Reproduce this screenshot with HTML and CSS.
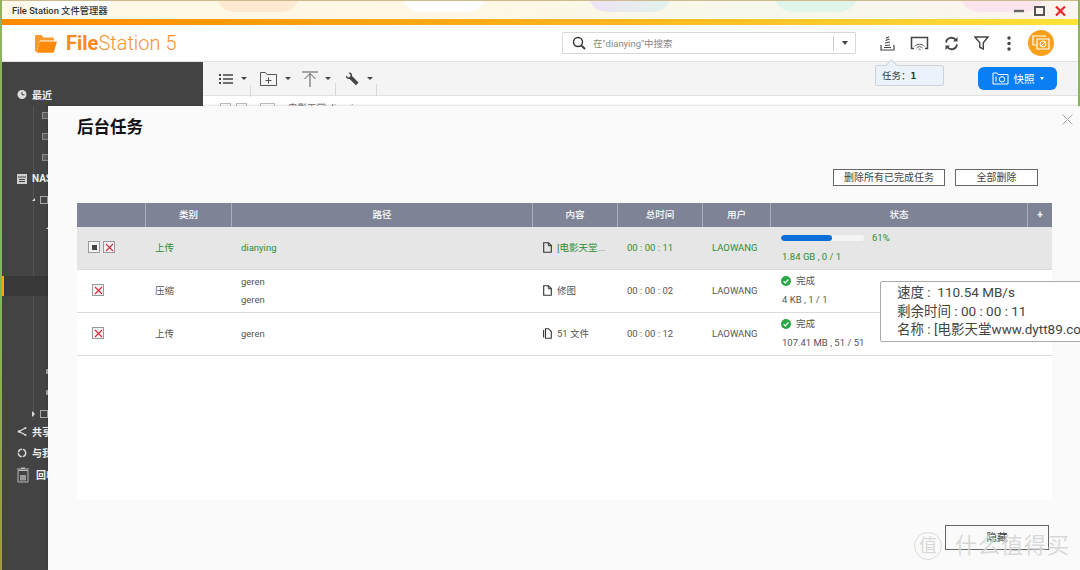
FILE: index.html
```html
<!DOCTYPE html>
<html lang="zh-CN">
<head>
  <meta charset="UTF-8">
  <title>File Station 文件管理器</title>
  <link rel="stylesheet" href="styles.css">
</head>
<body>
  <div class="window">
    <!-- 标题栏 -->
    <div class="titlebar">
      <div class="blobs">
        <span class="blob"></span>
        <span class="blob blob-peach"></span>
        <span class="blob"></span>
        <span class="blob blob-violet"></span>
        <span class="blob blob-mint"></span>
        <span class="blob blob-pink"></span>
      </div>
      <span class="titlebar-name">File Station 文件管理器</span>
      <div class="win-btns">
        <svg width="10" height="10" viewBox="0 0 10 10"><path d="M0 5h10" stroke="#666" stroke-width="2.4"/></svg>
        <svg width="11" height="10" viewBox="0 0 11 10"><path d="M1 1h9v8H1z" fill="none" stroke="#555" stroke-width="2"/></svg>
        <svg width="11" height="10" viewBox="0 0 11 10"><path d="M1 .5l9 9M10 .5l-9 9" stroke="#e8262a" stroke-width="2.2"/></svg>
      </div>
    </div>
    <div class="accent"></div>

    <!-- 顶部 -->
    <header class="header">
      <svg class="logo" width="24" height="19" viewBox="0 0 24 19">
        <path d="M1 17V2.500C1 1.700 1.600 1 2.500 1h5l2 2.500h9c.8 0 1.500.7 1.500 1.500v1.500H6L2.500 18z" fill="#fb9a2c"/>
        <path d="M5.800 7.500H23l-3 10.200c-.2.700-.7 1.100-1.400 1.100H2.600z" fill="#fd8a0b"/>
      </svg>
      <div class="brand"><b>File</b>Station 5</div>
      <div class="search">
        <svg width="14" height="14" viewBox="0 0 14 14"><circle cx="6" cy="6" r="4.500" fill="none" stroke="#333" stroke-width="1.400"/><path d="M9.300 9.300l3.700 3.700" stroke="#333" stroke-width="1.800"/></svg>
        <span class="search-text">在"dianying"中搜索</span>
        <span class="search-drop"><i class="caret"></i></span>
      </div>
      <div class="header-icons">
        <svg width="15" height="15" viewBox="0 0 15 15"><path d="M1 9v5h13V9M4 11.500h7M5 9.500l5-.5M5 7l5-1M5.500 4.500L9.500 3M6 2.200L9 .8" fill="none" stroke="#444" stroke-width="1.200"/></svg>
        <svg width="19" height="14" viewBox="0 0 19 14"><path d="M4 12.500H1.500V1.500h16v11H15" fill="none" stroke="#444" stroke-width="1.500"/><path d="M4.500 10.500c2.500-3 7.500-3 10 0M6.500 12c1.500-1.800 4.500-1.800 6 0M8.500 13.500c.6-.6 1.400-.6 2 0" fill="none" stroke="#555"/></svg>
        <svg width="15" height="15" viewBox="0 0 15 15"><path d="M2 6.500A5.500 5.500 0 0 1 12 4.200M13 8.500A5.500 5.500 0 0 1 3 10.800" fill="none" stroke="#444" stroke-width="1.800"/><path d="M13.500 1v4.500H9zM1.500 14V9.500H6z" fill="#444"/></svg>
        <svg width="15" height="14" viewBox="0 0 15 14"><path d="M1 1h13L9.300 6.800V13l-3.500-1.800v-4.400z" fill="none" stroke="#444" stroke-width="1.400"/></svg>
        <svg class="icon-dots" width="4" height="15" viewBox="0 0 4 15"><circle cx="2" cy="2" r="1.700" fill="#444"/><circle cx="2" cy="7.500" r="1.700" fill="#444"/><circle cx="2" cy="13" r="1.700" fill="#444"/></svg>
        <span class="avatar">
          <svg width="18" height="16" viewBox="0 0 18 16"><path d="M13 2V1H1v9h3" fill="none" stroke="#fff" stroke-width="1.200"/><path d="M5 4h12v10H5z" fill="none" stroke="#fff" stroke-width="1.200"/><circle cx="11" cy="9" r="3" fill="none" stroke="#fff"/><path d="M9 11l4-4" stroke="#fff"/></svg>
        </span>
      </div>
    </header>

    <div class="main">
      <!-- 左侧导航 -->
      <aside class="sidebar">
        <div class="tree-line"></div>
        <div class="side-row side-top">
          <svg width="9" height="9" viewBox="0 0 9 9"><circle cx="4.500" cy="4.500" r="4.500" fill="#ddd"/><path d="M4.500 2v2.800H7" fill="none" stroke="#444"/></svg>
          <b>最近</b>
        </div>
        <div class="side-row side-sub"><i class="mini-doc"></i></div>
        <div class="side-row side-sub"><i class="mini-doc"></i></div>
        <div class="side-row side-sub"><i class="mini-doc"></i></div>
        <div class="side-row side-top">
          <svg width="10" height="10" viewBox="0 0 10 10"><path d="M0 0h10v10H0z" fill="#cfcfcf"/><path d="M1 3h8M2 5.500h6M2 7.500h6" stroke="#444"/></svg>
          <b>NAS</b>
        </div>
        <div class="side-row side-sub side-open"><i class="tri-open"></i><i class="mini-drive"></i></div>
        <div class="side-row side-leaf side-leaf-low"><i class="tri-open"></i></div>
        <div class="side-row"></div>
        <div class="side-row"></div>
        <div class="side-row side-selected"></div>
        <div class="side-row"></div>
        <div class="side-row"></div>
        <div class="side-row"></div>
        <div class="side-row side-leaf"><i class="dot"></i></div>
        <div class="side-row side-leaf"><i class="dot"></i></div>
        <div class="side-row side-sub side-open side-closed"><i class="tri-closed"></i><i class="mini-drive"></i></div>
        <div class="side-row side-top">
          <svg width="9" height="9" viewBox="0 0 9 9"><path d="M8 1L1.500 4.500 8 8" fill="none" stroke="#ddd" stroke-width="1.300"/><circle cx="1.500" cy="4.500" r="1.300" fill="#ddd"/><circle cx="8" cy="1" r="1" fill="#ddd"/><circle cx="8" cy="8" r="1" fill="#ddd"/></svg>
          <b>共享</b>
        </div>
        <div class="side-row side-top">
          <svg width="10" height="10" viewBox="0 0 10 10"><circle cx="5" cy="5" r="3.700" fill="none" stroke="#ddd" stroke-width="1.400" stroke-dasharray="5 1"/></svg>
          <b>与我</b>
        </div>
        <div class="side-row side-top side-trash">
          <svg width="12" height="16" viewBox="0 0 12 16"><path d="M1 3.500h10V15H1z" fill="none" stroke="#bbb"/><path d="M3 8h6v5.500H3z" fill="#999"/><path d="M0 2h12M4 1h4" stroke="#bbb" stroke-width="1.200"/></svg>
          <b>回收</b>
        </div>
      </aside>

      <div class="content">
        <!-- 工具栏 -->
        <div class="toolbar">
          <div class="tool">
            <svg width="14" height="12" viewBox="0 0 14 12"><path d="M4 2h10M4 6h10M4 10h10" stroke="#444" stroke-width="1.400"/><path d="M0 1h2v2H0zM0 5h2v2H0zM0 9h2v2H0z" fill="#444"/></svg>
            <i class="caret caret-small"></i>
          </div>
          <div class="tool tool-folder">
            <svg width="17" height="14" viewBox="0 0 17 14"><path d="M.5 13.500V.5h5l1.500 2h9.500v11z" fill="none" stroke="#555"/><path d="M8.500 5.500v6M5.500 8.500h6" stroke="#555"/></svg>
            <i class="caret caret-small"></i>
          </div>
          <div class="tool tool-upload">
            <svg width="16" height="16" viewBox="0 0 16 16"><path d="M0 1h16M8 16V2.500M2.500 8L8 2.500 13.500 8" fill="none" stroke="#555"/></svg>
            <i class="caret caret-small"></i>
          </div>
          <div class="tool tool-wrench">
            <svg width="14" height="14" viewBox="0 0 14 14"><path d="M1 3.500L3.300 5.500 5.300 4.800 5.500 2.800 3.500.8C5.500 0 7.500 1.500 7 4l6.500 6.500-2.500 2.700L4.500 7C2.200 7.500.5 5.500 1 3.500z" fill="#444"/></svg>
            <i class="caret caret-small"></i>
          </div>
          <button class="snapshot">
            <svg width="17" height="13" viewBox="0 0 17 13"><path d="M1 12V1h4l1 1.500h10V12z" fill="none" stroke="#fff"/><circle cx="10" cy="7.300" r="2.700" fill="none" stroke="#fff"/><path d="M4 4.500v5" stroke="#fff"/></svg>
            <span class="snapshot-text">快照</span>
            <i class="caret caret-white"></i>
          </button>
        </div>
        <div class="file-row">
          <i class="file-check"></i>
          <i class="file-check"></i>
          <i class="file-check file-check-wide"></i>
          <span class="file-name">电影天堂 dianying</span>
        </div>
      </div>
    </div>
  </div>

  <div class="task-tip">任务：<b>1</b></div>

  <!-- 后台任务对话框 -->
  <div class="modal">
    <svg class="modal-close" width="11" height="11" viewBox="0 0 11 11"><path d="M.5.500l10 10M10.500.500l-10 10" stroke="#aaa"/></svg>
    <h2 class="modal-title">后台任务</h2>
    <div class="modal-actions">
      <button class="btn btn-wide">删除所有已完成任务</button>
      <button class="btn">全部删除</button>
    </div>

    <div class="panel">
      <div class="row row-head">
        <div></div>
        <div>类别</div>
        <div>路径</div>
        <div>内容</div>
        <div>总时间</div>
        <div>用户</div>
        <div>状态</div>
        <div class="plus">+</div>
      </div>

      <div class="row row-active">
        <div class="cell-actions">
          <span class="act act-stop"><i></i></span>
          <span class="act"><svg width="9" height="9" viewBox="0 0 9 9"><path d="M1 1l7 7M8 1L1 8" stroke="#d8283c" stroke-width="1.100"/></svg></span>
        </div>
        <div class="cell-pad">上传</div>
        <div class="cell-pad">dianying</div>
        <div class="cell-file">
          <svg width="9" height="11" viewBox="0 0 9 11"><path d="M.7.700h4.800l2.800 2.800v6.800H.7z" fill="none" stroke="#333" stroke-width="1.100"/><path d="M5.300.700v3h3" fill="none" stroke="#333"/></svg>
          [电影天堂...
        </div>
        <div class="cell-pad">00 : 00 : 11</div>
        <div class="cell-pad">LAOWANG</div>
        <div class="cell-status">
          <div class="progress-line">
            <div class="bar"><div class="bar-fill" style="width: 61%"></div></div>
            <span>61%</span>
          </div>
          <div class="status-sub">1.84 GB , 0 / 1</div>
        </div>
        <div></div>
      </div>

      <div class="row">
        <div class="cell-actions">
          <span class="act"><svg width="9" height="9" viewBox="0 0 9 9"><path d="M1 1l7 7M8 1L1 8" stroke="#d8283c" stroke-width="1.100"/></svg></span>
        </div>
        <div class="cell-pad">压缩</div>
        <div class="cell-pad cell-paths"><span>geren</span><span>geren</span></div>
        <div class="cell-file">
          <svg width="9" height="11" viewBox="0 0 9 11"><path d="M.7.700h4.800l2.800 2.800v6.800H.7z" fill="none" stroke="#333" stroke-width="1.100"/><path d="M5.300.700v3h3" fill="none" stroke="#333"/></svg>
          修图
        </div>
        <div class="cell-pad">00 : 00 : 02</div>
        <div class="cell-pad">LAOWANG</div>
        <div class="cell-status">
          <div class="done-line">
            <svg width="10" height="10" viewBox="0 0 10 10"><circle cx="5" cy="5" r="5" fill="#27a844"/><path d="M2.600 5.100l1.700 1.700 3.100-3.300" fill="none" stroke="#fff" stroke-width="1.200"/></svg>
            完成
          </div>
          <div class="status-sub">4 KB , 1 / 1</div>
        </div>
        <div></div>
      </div>

      <div class="row">
        <div class="cell-actions">
          <span class="act"><svg width="9" height="9" viewBox="0 0 9 9"><path d="M1 1l7 7M8 1L1 8" stroke="#d8283c" stroke-width="1.100"/></svg></span>
        </div>
        <div class="cell-pad">上传</div>
        <div class="cell-pad">geren</div>
        <div class="cell-file">
          <svg width="9" height="11" viewBox="0 0 9 11"><path d="M2.500.700h3l2.800 2.800v6.800H2.500z" fill="none" stroke="#333" stroke-width="1.100"/><path d="M.6 2v7.500" stroke="#333" stroke-width="1.100"/></svg>
          51 文件
        </div>
        <div class="cell-pad">00 : 00 : 12</div>
        <div class="cell-pad">LAOWANG</div>
        <div class="cell-status">
          <div class="done-line">
            <svg width="10" height="10" viewBox="0 0 10 10"><circle cx="5" cy="5" r="5" fill="#27a844"/><path d="M2.600 5.100l1.700 1.700 3.100-3.300" fill="none" stroke="#fff" stroke-width="1.200"/></svg>
            完成
          </div>
          <div class="status-sub">107.41 MB , 51 / 51</div>
        </div>
        <div></div>
      </div>
    </div>

    <div class="modal-foot">
      <button class="btn btn-hide">隐藏</button>
    </div>
  </div>

  <!-- 进度提示框 -->
  <div class="speed-tip">
    <div>速度 :&nbsp; 110.54 MB/s</div>
    <div>剩余时间 : 00 : 00 : 11</div>
    <div>名称 : [电影天堂www.dytt89.com]</div>
  </div>

  <div class="watermark"><span class="watermark-seal">值</span>什么值得买</div>
</body>
</html>
```

FILE: styles.css
```css
* {
  margin: 0;
  padding: 0;
  box-sizing: border-box;
}
html, body {
  width: 1080px;
  height: 570px;
  overflow: hidden;
}
body {
  position: relative;
  font-family: Roboto, "Noto Sans CJK SC", sans-serif;
  font-size: 9.5px;
  color: #555;
  background: linear-gradient(180deg, #8fb35f, #7fb860 50%, #a09c30);
}
button {
  font-family: inherit;
}

.window {
  height: 570px;
  margin: 0 2px;
  display: flex;
  flex-direction: column;
  background: #fff;
}

/* 标题栏 */
.titlebar {
  position: relative;
  height: 19px;
  flex: none;
  display: flex;
  align-items: center;
  justify-content: space-between;
  padding: 0 12px 0 10px;
  overflow: hidden;
  background: linear-gradient(90deg, #fdf8e8, #fff7e4 40%, #f6f8ec 70%, #fcf4ee);
  border-top: 1px solid #cdb98e;
}
.blobs {
  position: absolute;
  top: -8px;
  left: 28px;
  display: flex;
  gap: 102px;
}
.blob {
  width: 84px;
  height: 19px;
  border-radius: 0 0 22px 22px;
  background: #fff;
}
.blob-peach { background: #fde9cf; }
.blob-violet { background: linear-gradient(90deg, #eee3f5, #e3f3ea); }
.blob-mint { background: #dff5ea; }
.blob-pink { background: #fbe4ee; }
.titlebar-name {
  position: relative;
  font-size: 9.3px;
  font-weight: 500;
  color: #333;
}
.win-btns {
  position: relative;
  display: flex;
  align-items: center;
  gap: 10px;
  margin-top: 1px;
}
.accent {
  height: 6px;
  flex: none;
  background: linear-gradient(90deg, #ff8a00, #ffb41e 55%, #ffe23a);
}

/* 顶部 */
.header {
  height: 37px;
  flex: none;
  display: flex;
  align-items: center;
  background: #fff;
  border-bottom: 1px solid #e2e2e2;
}
.logo {
  margin-left: 32px;
}
.brand {
  margin-left: 8px;
  font-size: 20px;
  font-weight: 300;
  color: #f7922e;
  width: 110px;
  white-space: nowrap;
}
.brand b {
  font-weight: 700;
  color: #f78a1a;
}
.search {
  margin-left: 386px;
  width: 294px;
  height: 22px;
  display: flex;
  align-items: center;
  padding-left: 9px;
  border: 1px solid #d8d8d8;
  border-radius: 1px;
}
.search-text {
  flex: 1;
  margin-left: 7px;
  color: #888;
  font-size: 9.5px;
}
.search-drop {
  width: 22px;
  height: 15px;
  display: flex;
  align-items: center;
  justify-content: center;
  border-left: 1px solid #ccc;
}
.caret {
  display: block;
  width: 0;
  height: 0;
  border-left: 3.5px solid transparent;
  border-right: 3.5px solid transparent;
  border-top: 4px solid #444;
}
.caret-small {
  border-left-width: 3px;
  border-right-width: 3px;
  border-top-width: 3px;
}
.caret-white {
  border-left-width: 2.5px;
  border-right-width: 2.5px;
  border-top: 3px solid #fff;
}
.header-icons {
  margin-left: 24px;
  display: flex;
  align-items: center;
  gap: 15px;
}
.header-icons svg {
  flex: none;
}
.header-icons .icon-dots {
  margin-left: 3px;
}
.avatar {
  width: 26px;
  height: 26px;
  margin-left: 2px;
  border-radius: 50%;
  background: #f9a01b;
  display: flex;
  align-items: center;
  justify-content: center;
}

/* 主区域 */
.main {
  flex: 1;
  display: flex;
  min-height: 0;
}
.sidebar {
  position: relative;
  width: 201px;
  flex: none;
  padding-top: 22px;
  background: #434343;
  color: #eee;
  font-size: 10px;
}
.tree-line {
  position: absolute;
  top: 44px;
  left: 31px;
  width: 1px;
  height: 314px;
  background: #555;
}
.side-row {
  position: relative;
  height: 21px;
  display: flex;
  align-items: center;
}
.side-top {
  padding-left: 15px;
  gap: 5px;
}
.side-top svg {
  width: 10px;
  flex: none;
}
.side-sub {
  padding-left: 40px;
}
.side-open {
  padding-left: 30px;
  gap: 5px;
}
.side-leaf {
  padding-left: 44px;
  padding-top: 6px;
}
.side-leaf-low {
  padding-top: 14px;
}
.side-closed {
  padding-top: 6px;
  padding-left: 30px;
}
.side-trash {
  gap: 7px;
  padding-top: 2px;
}
.side-trash svg {
  width: 12px;
}
.side-selected {
  height: 20px;
  margin-top: 3px;
  margin-bottom: -1px;
  background: #383838;
  box-shadow: inset 2px 0 0 #f9a800;
}
.mini-doc {
  width: 7px;
  height: 7px;
  border: 1px solid #8c8c8c;
  background: #5c5c5c;
}
.mini-drive {
  width: 8px;
  height: 8px;
  border: 1px solid #aaa;
}
.tri-open {
  width: 0;
  height: 0;
  border-left: 3px solid transparent;
  border-bottom: 3px solid #ddd;
}
.tri-closed {
  width: 0;
  height: 0;
  border-top: 3px solid transparent;
  border-bottom: 3px solid transparent;
  border-left: 3px solid #ddd;
}
.dot {
  width: 3px;
  height: 5px;
  border-radius: 1px;
  background: #aaa;
}

.content {
  flex: 1;
  min-width: 0;
}
.toolbar {
  height: 34px;
  display: flex;
  align-items: center;
  padding-left: 16px;
  background: #f4f4f4;
  border-bottom: 1px solid #e2e2e2;
}
.tool {
  position: relative;
  width: 41px;
  display: flex;
  align-items: center;
  gap: 8px;
}
.tool-folder {
  width: 42px;
}
.tool-upload {
  width: 43px;
  gap: 7px;
}
.tool-wrench {
  gap: 8px;
}
.tool::after {
  content: "";
  position: absolute;
  top: 12px;
  right: 9px;
  width: 1px;
  height: 12px;
  background: #d8d8d8;
}
.tool-folder::after {
  display: none;
}
.snapshot {
  margin-left: auto;
  margin-right: 21px;
  width: 79px;
  height: 23px;
  display: flex;
  align-items: center;
  justify-content: center;
  gap: 5px;
  border: 0;
  border-radius: 6px;
  background: #0a7ff5;
  color: #fff;
  font-size: 10.5px;
}
.file-row {
  height: 10px;
  display: flex;
  align-items: flex-start;
  gap: 5px;
  padding: 7px 0 0 17px;
  overflow: hidden;
  background: #fff;
}
.file-check {
  width: 11px;
  height: 10px;
  border: 1px solid #bbb;
  flex: none;
}
.file-check-wide {
  width: 15px;
  margin-left: 8px;
}
.file-name {
  margin-left: 8px;
  color: #777;
  line-height: 10px;
}

/* 任务提示 */
.task-tip {
  position: absolute;
  left: 875px;
  top: 65px;
  width: 69px;
  height: 21px;
  padding-left: 6px;
  line-height: 20px;
  font-size: 9.5px;
  color: #333;
  background: #ebf2f9;
  border: 1px solid #ccd2d8;
  border-radius: 2px;
}
.task-tip b {
  font-family: "DejaVu Sans Mono", monospace;
  font-weight: 700;
}
.task-tip::before {
  content: "";
  position: absolute;
  left: 11px;
  top: -5px;
  width: 8px;
  height: 8px;
  background: #ebf2f9;
  border-left: 1px solid #ccd2d8;
  border-top: 1px solid #ccd2d8;
  transform: rotate(45deg);
}

/* 对话框 */
.modal {
  position: absolute;
  left: 48px;
  top: 106px;
  right: 0;
  bottom: 0;
  padding: 0 28px 0 29px;
  background: #fafafa;
  box-shadow: -1px -1px 2px rgba(0, 0, 0, 0.12);
  display: flex;
  flex-direction: column;
}
.modal-close {
  position: absolute;
  top: 8px;
  right: 7px;
}
.modal-title {
  margin-top: 11px;
  font-size: 16.5px;
  line-height: 22px;
  font-weight: 700;
  color: #111;
}
.modal-actions {
  margin-top: 30px;
  padding-right: 14px;
  display: flex;
  justify-content: flex-end;
  gap: 10px;
}
.btn {
  width: 83px;
  height: 17px;
  background: #fff;
  border: 1px solid #666;
  color: #444;
  font-size: 10px;
  line-height: 15px;
}
.btn-wide {
  width: 112px;
}
.panel {
  height: 297px;
  margin-top: 17px;
  background: #fff;
}
.row {
  height: 43px;
  padding-bottom: 2px;
  display: grid;
  grid-template-columns: 68px 86px 301px 85px 85px 68px 257px 25px;
  align-items: center;
  border-bottom: 1px solid #dcdcdc;
}
.row-head {
  height: 24px;
  padding-bottom: 0;
  background: #7e8496;
  color: #fff;
  font-weight: 500;
  text-align: center;
  border-bottom: 0;
  align-items: stretch;
}
.row-head > div {
  line-height: 24px;
  border-left: 1px solid #a9aebb;
}
.row-head > div:first-child {
  border-left: 0;
}
.plus {
  font-weight: 700;
  font-size: 10px;
}
.row-active {
  background: #e6e6e6;
  color: #2b8f31;
}
.cell-actions {
  display: flex;
  gap: 3px;
  padding-left: 15px;
}
.row-active .cell-actions {
  padding-left: 11px;
}
.act {
  width: 12px;
  height: 12px;
  display: flex;
  align-items: center;
  justify-content: center;
  background: #f4f4f4;
  border: 1px solid #999;
}
.act-stop i {
  width: 5px;
  height: 5px;
  background: #444;
}
.cell-pad {
  padding-left: 10px;
}
.cell-paths {
  display: flex;
  flex-direction: column;
  gap: 7px;
  line-height: 11px;
}
.cell-file {
  display: flex;
  align-items: center;
  gap: 5px;
  padding-left: 11px;
  white-space: nowrap;
}
.cell-file svg {
  flex: none;
}
.cell-status {
  padding-left: 11px;
  display: flex;
  flex-direction: column;
  gap: 8px;
  line-height: 11px;
}
.progress-line {
  display: flex;
  align-items: center;
  gap: 8px;
}
.bar {
  width: 83px;
  height: 6px;
  border-radius: 3px;
  background: #f4f4f4;
  overflow: hidden;
}
.bar-fill {
  height: 100%;
  border-radius: 3px;
  background: #0a6fd8;
}
.done-line {
  display: flex;
  align-items: center;
  gap: 5px;
}
.status-sub {
  padding-left: 1px;
}
.modal-foot {
  margin-top: 25px;
  padding-right: 3px;
  display: flex;
  justify-content: flex-end;
}
.btn-hide {
  width: 104px;
  height: 25px;
  background: #fafafa;
  font-size: 10.5px;
}

/* 进度提示框 */
.speed-tip {
  position: absolute;
  left: 880px;
  top: 281px;
  width: 240px;
  height: 61px;
  padding: 1px 0 0 16px;
  font-size: 13.5px;
  line-height: 18.5px;
  white-space: nowrap;
  color: #444;
  background: #fff;
  border: 1px solid #aaa;
  border-radius: 2px;
}

/* 水印 */
.watermark {
  position: absolute;
  left: 914px;
  top: 528px;
  display: flex;
  align-items: center;
  font-size: 22px;
  line-height: 36px;
  letter-spacing: 1px;
  color: rgba(190, 190, 190, 0.6);
  text-shadow: 0 0 1px rgba(255, 255, 255, 0.8);
}
.watermark-seal {
  width: 28px;
  height: 28px;
  margin-right: 13px;
  border-radius: 50%;
  border: 1px solid rgba(190, 190, 190, 0.55);
  font-size: 18px;
  line-height: 26px;
  letter-spacing: 0;
  text-align: center;
}
```
